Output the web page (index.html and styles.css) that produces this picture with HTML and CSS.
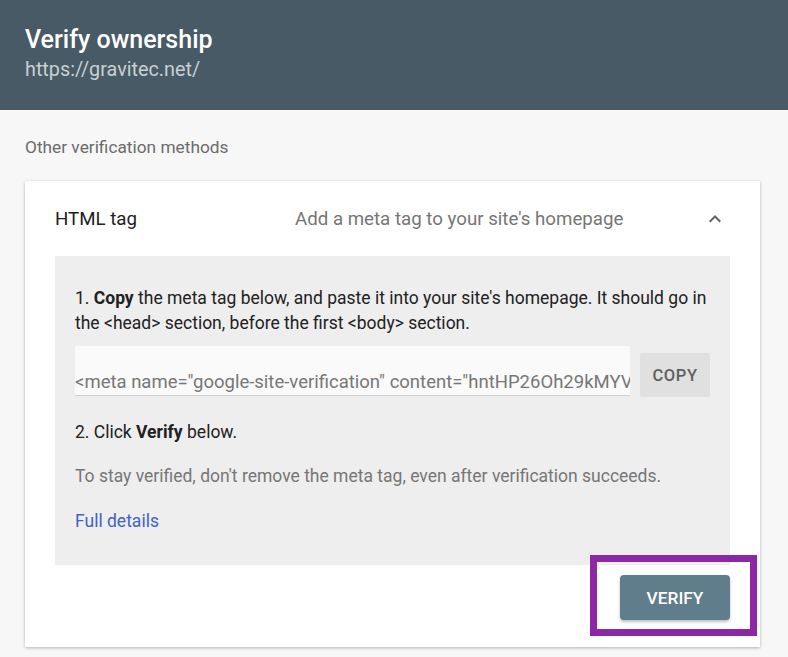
FILE: index.html
```html
<!DOCTYPE html>
<html lang="en">
<head>
  <meta charset="UTF-8">
  <meta name="viewport" content="width=device-width, initial-scale=1.0">
  <title>Verify ownership</title>
  <link rel="stylesheet" href="styles.css">
</head>
<body>
  <header class="topbar">
    <h1 class="topbar-title">Verify ownership</h1>
    <div class="topbar-site">https://gravitec.net/</div>
  </header>

  <main class="main">
    <div class="section-label">Other verification methods</div>

    <div class="card">
      <div class="card-head">
        <span class="method-name">HTML tag</span>
        <span class="method-desc">Add a meta tag to your site's homepage</span>
        <svg class="chevron" width="24" height="24" viewBox="0 0 24 24">
          <path d="M7.4 15.4 12 10.8l4.6 4.6L18 14l-6-6-6 6z" fill="#616161"/>
        </svg>
      </div>

      <div class="panel">
        <p class="step">1. <b>Copy</b> the meta tag below, and paste it into your site's homepage. It should go in the &lt;head&gt; section, before the first &lt;body&gt; section.</p>
        <div class="tag-row">
          <input class="tag-input" type="text" readonly value='<meta name="google-site-verification" content="hntHP26Oh29kMYVx3qLr0pT8nWfZ" />'>
          <button class="btn-copy">COPY</button>
        </div>
        <p class="step step-2">2. Click <b>Verify</b> below.</p>
        <p class="note">To stay verified, don't remove the meta tag, even after verification succeeds.</p>
        <a class="details" href="#">Full details</a>
      </div>

      <div class="card-foot">
        <div class="verify-wrap">
          <button class="btn-verify">VERIFY</button>
        </div>
      </div>
    </div>
  </main>
</body>
</html>
```

FILE: styles.css
```css
body {
  margin: 0;
  font-family: Roboto, "Liberation Sans", Arial, sans-serif;
  background: #f7f7f7;
  color: #212121;
  height: 657px;
  overflow: hidden;
}
.topbar {
  background: #475a65;
  height: 110px;
  box-sizing: border-box;
  padding: 24px 25px 0;
}
.topbar-title {
  margin: 0;
  font-size: 25px;
  line-height: 32px;
  font-weight: 500;
  color: #fff;
}
.topbar-site {
  font-size: 19.8px;
  line-height: 26px;
  color: #c9d0d4;
  margin-top: 1px;
}
.main {
  padding: 25px 28px 0 25px;
}
.section-label {
  font-size: 17.3px;
  line-height: 24px;
  color: #6b6b6b;
  margin-bottom: 22px;
}
.card {
  background: #fff;
  box-shadow: 0 1px 3px rgba(0, 0, 0, 0.28);
  padding: 0 30px 27px;
}
.card-head {
  height: 75px;
  display: flex;
  align-items: center;
}
.method-name {
  font-size: 18.7px;
  width: 240px;
}
.method-desc {
  font-size: 18.7px;
  color: #767676;
  flex: 1;
}
.chevron {
  margin-right: 3px;
}
.panel {
  background: #eeeeee;
  padding: 30px 20px 31px;
  font-size: 17.5px;
  line-height: 25px;
}
.panel p {
  margin: 0;
}
.step b {
  font-weight: 700;
}
.tag-row {
  display: flex;
  align-items: flex-end;
  gap: 10px;
  margin-top: 10px;
}
.tag-input {
  width: 555px;
  height: 50px;
  box-sizing: border-box;
  padding: 22px 0 0;
  border: none;
  border-bottom: 1px solid #cfcfcf;
  background: #fafafa;
  font-family: inherit;
  font-size: 18.5px;
  color: #777;
  outline: none;
}
.btn-copy {
  width: 70px;
  height: 44px;
  border: none;
  border-radius: 2px;
  background: #e0e0e0;
  color: #5f5f5f;
  font-family: inherit;
  font-size: 16.5px;
  font-weight: 500;
  letter-spacing: 0.6px;
  padding: 0;
  margin-bottom: -1px;
}
.step-2 {
  margin-top: 24px !important;
}
.note {
  color: #767676;
  margin-top: 19px !important;
}
.details {
  display: block;
  margin-top: 20px;
  color: #4262c9;
  text-decoration: none;
}
.card-foot {
  display: flex;
  justify-content: flex-end;
  padding-top: 10px;
}
.verify-wrap {
  position: relative;
}
.verify-wrap::after {
  content: "";
  position: absolute;
  left: -30px;
  right: -27px;
  top: -20px;
  bottom: -16px;
  border: 7px solid #8c27a6;
  pointer-events: none;
}
.btn-verify {
  width: 110px;
  height: 45px;
  border: none;
  border-radius: 4px;
  background: #607d8b;
  color: #fff;
  font-family: inherit;
  font-size: 17.3px;
  font-weight: 500;
  padding: 0;
  box-shadow: 0 2px 3px rgba(0, 0, 0, 0.25);
}
```
